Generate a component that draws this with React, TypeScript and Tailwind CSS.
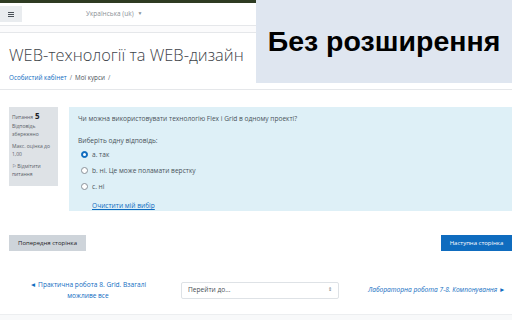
import React from "react";

const font = { fontFamily: '"Open Sans", "Noto Sans", sans-serif' };

function Radio({ checked }: { checked?: boolean }) {
  return (
    <span
      className={
        "inline-flex items-center justify-center w-[7px] h-[7px] rounded-full border " +
        (checked ? "border-[#0f6cbf] bg-[#0f6cbf]" : "border-[#8a9199] bg-white")
      }
    >
      {checked ? <span className="w-[3px] h-[3px] rounded-full bg-white" /> : null}
    </span>
  );
}

export default function App() {
  return (
    <div
      className="relative w-[512px] h-[320px] overflow-hidden bg-white text-[#1d2125]"
      style={font}
    >
      {/* top dark strip */}
      <div className="h-[3px] bg-[#2e3b22]" />
      {/* navbar */}
      <div className="h-[23px] flex items-center border-b border-[#e5e7ea] bg-white">
        <div className="w-[22px] h-[16px] bg-[#e9ecef] flex items-center justify-center">
          <svg width="6" height="5" viewBox="0 0 6 5">
            <rect x="0" y="0" width="6" height="1" fill="#495057" />
            <rect x="0" y="2" width="6" height="1" fill="#495057" />
            <rect x="0" y="4" width="6" height="1" fill="#495057" />
          </svg>
        </div>
        <div className="ml-[64px] text-[6.5px] text-[#8a9096] flex items-center gap-[4px]">
          <span>Українська (uk)</span>
          <span className="text-[5px]">▼</span>
        </div>
      </div>
      <div className="h-[6px] bg-[#fbfbfc]" />
      {/* header */}
      <div className="h-[58px] border-t border-b border-[#e5e7ea] px-[9px] flex flex-col">
        <div className="mt-[9px] text-[16.4px] font-light leading-[26px] text-[#3d4349]">
          WEB-технології та WEB-дизайн
        </div>
        <div className="mt-[5px] text-[6.3px] flex gap-[3px] text-[#495057]">
          <span className="text-[#0f6cbf]">Особистий кабінет</span>
          <span className="text-[#6a737b]">/</span>
          <span>Мої курси</span>
          <span className="text-[#6a737b]">/</span>
        </div>
      </div>
      {/* question area */}
      <div className="flex mt-[17px] pl-[9px] gap-[11px]">
        <div className="w-[49px] h-[79px] bg-[#dee2e6] px-[3px] pt-[5px] text-[5px] leading-[8px] text-[#5a6168] shrink-0">
          <div className="flex items-baseline gap-[2px]">
            <span>Питання</span>
            <span className="text-[8px] font-bold text-[#1d2125]">5</span>
          </div>
          <div className="mt-[1px] leading-[8px]">Відповідь збережено</div>
          <div className="mt-[4px] leading-[8px]">Макс. оцінка до 1,00</div>
          <div className="mt-[4px] leading-[8px]">⚐ Відмітити питання</div>
        </div>
        <div className="flex-1 h-[104px] bg-[#def0f7] pl-[9px] pt-[7px] text-[6.6px] text-[#4a535b]">
          <div>Чи можна використовувати технологію Flex і Grid в одному проекті?</div>
          <div className="mt-[12px]">Виберіть одну відповідь:</div>
          <div className="mt-[4px] flex flex-col gap-[6px] pl-[3px]">
            <div className="flex items-center gap-[4px]">
              <Radio checked />
              <span>a. так</span>
            </div>
            <div className="flex items-center gap-[4px]">
              <Radio />
              <span>b. ні. Це може поламати верстку</span>
            </div>
            <div className="flex items-center gap-[4px]">
              <Radio />
              <span>c. ні</span>
            </div>
          </div>
          <div className="mt-[10px] pl-[14px] text-[#0f6cbf] underline">Очистити мій вибір</div>
        </div>
      </div>
      {/* buttons */}
      <div className="flex justify-between mt-[24px] pl-[9px]">
        <div className="w-[77px] h-[16px] bg-[#ced4da] text-[6px] text-[#1d2125] flex items-center justify-center">
          Попередня сторінка
        </div>
        <div className="w-[71px] h-[16px] bg-[#0f6cbf] text-[6px] text-white flex items-center justify-center">
          Наступна сторінка
        </div>
      </div>
      {/* bottom nav */}
      <div className="flex items-center mt-[28px] text-[6.6px] text-[#0f6cbf]">
        <div className="w-[176px] flex flex-col items-center leading-[11px] text-center">
          <span>◄ Практична робота 8. Grid. Взагалі</span>
          <span>можливе все</span>
        </div>
        <div className="ml-[5px] w-[158px] h-[17px] border border-[#dee2e6] rounded-[2px] flex items-center justify-between px-[6px] text-[#495057]">
          <span>Перейти до...</span>
          <span className="text-[5px] text-[#6a737b]">⇕</span>
        </div>
        <div className="ml-[29px] italic">Лабораторна робота 7-8. Компонування ►</div>
      </div>
      <div className="absolute left-0 right-0 top-[314px] h-[6px] border-t border-[#eceef0] bg-[#f8f9fa]" />
      {/* overlay label */}
      <div className="absolute left-[256px] top-0 w-[256px] h-[83px] bg-[#dfe6f0] flex items-center justify-center">
        <span
          className="text-[28.5px] font-bold text-black"
          style={{ fontFamily: '"Liberation Sans", Arial, sans-serif' }}
        >
          Без розширення
        </span>
      </div>
    </div>
  );
}
